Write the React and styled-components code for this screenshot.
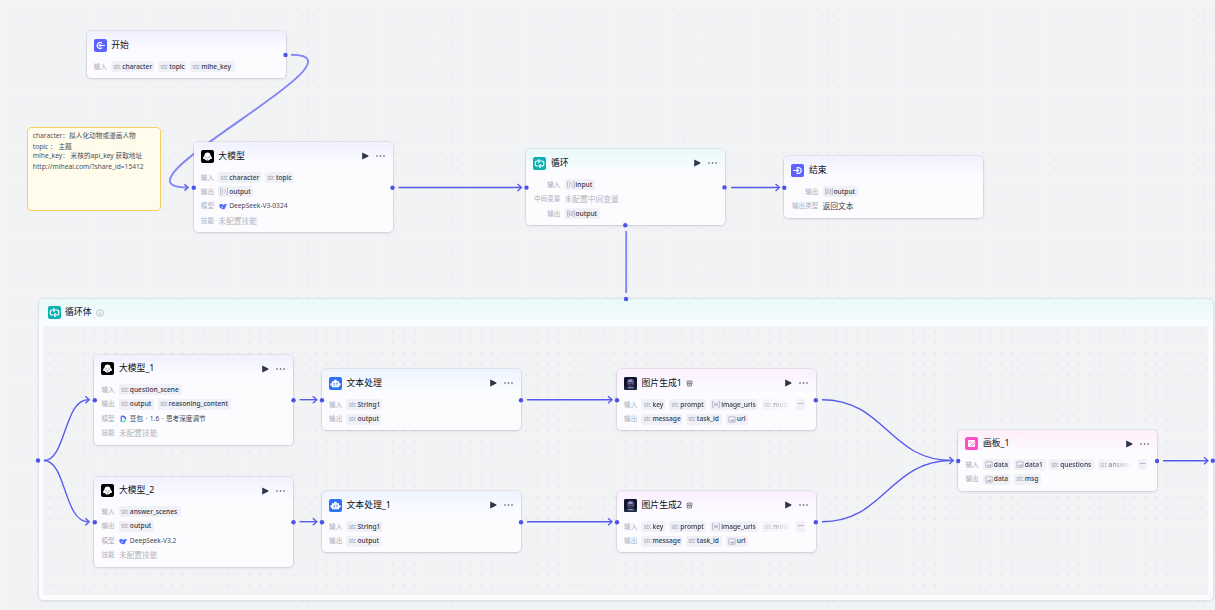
import React from 'react'
import styled, { createGlobalStyle } from 'styled-components';

const input = '输入';
const output = '输出';

const nodes = [
    {
        id: 'start', x: 86.7, y: 31.3, h: 47, title: '开始', icon: 'start', tint: '#f1f1ff', plain: true,
        rows: [{ label: input, tags: ['str:character:43.3', 'str:topic:28.3', 'str:mihe_key:45'], h: 15 }],
    },
    {
        id: 'llm', x: 193.8, y: 142.3, h: 90, title: '大模型', icon: 'llm', tint: '#f1f1ff',
        rows: [
            { label: input, tags: ['str:character:43', 'str:topic:29.3'] },
            { label: output, tags: ['obj:output:35'] },
            { label: '模型', model: 'DeepSeek-V3-0324', brand: 'deepseek' },
            { label: '技能', empty: '未配置技能', h: 16 },
        ],
    },
    {
        id: 'loop', x: 526.4, y: 149.4, h: 76, title: '循环', icon: 'loop', tint: '#e6f9f8', labelWidth: 27,
        rows: [
            { label: input, tags: ['obj:input:30.7'] },
            { label: '中间变量', empty: '未配置中间变量' },
            { label: output, tags: ['arr:output:35.3'], h: 15 },
        ],
    },
    {
        id: 'end', x: 784.4, y: 156.4, h: 62, title: '结束', icon: 'end', tint: '#f1f1ff', labelWidth: 27, plain: true,
        rows: [
            { label: output, tags: ['arr:output:35.3'] },
            { label: '输出类型', text: '返回文本', h: 15 },
        ],
    },
    {
        id: 'llm1', x: 94.4, y: 354.5, h: 90.5, title: '大模型_1', icon: 'llm', tint: '#f1f1ff',
        rows: [
            { label: input, tags: ['str:question_scene:63.3'] },
            { label: output, tags: ['str:output:35.3', 'str:reasoning_content:73.3'] },
            { label: '模型', model: '豆包 · 1.6 · 思考深度调节', brand: 'doubao', h: 15 },
            { label: '技能', empty: '未配置技能' },
        ],
    },
    {
        id: 'llm2', x: 94.4, y: 476.5, h: 90.5, title: '大模型_2', icon: 'llm', tint: '#f1f1ff',
        rows: [
            { label: input, tags: ['str:answer_scenes:62'] },
            { label: output, tags: ['str:output:35.3'] },
            { label: '模型', model: 'DeepSeek-V3.2', brand: 'deepseek', h: 15 },
            { label: '技能', empty: '未配置技能' },
        ],
    },
    {
        id: 'text', x: 322, y: 369.2, h: 60.8, title: '文本处理', icon: 'text', tint: '#edf4ff',
        rows: [
            { label: input, tags: ['str:String1:35.7'] },
            { label: output, tags: ['str:output:35'], h: 15 },
        ],
    },
    {
        id: 'text1', x: 322, y: 491.2, h: 60.8, title: '文本处理_1', icon: 'text', tint: '#edf4ff',
        rows: [
            { label: input, tags: ['str:String1:35.7'] },
            { label: output, tags: ['str:output:35'], h: 15 },
        ],
    },
    {
        id: 'image1', x: 617, y: 369.2, h: 60.8, title: '图片生成1', icon: 'image', tint: '#fbefff', plugin: true,
        rows: [
            { label: input, more: true, tags: ['str:key:24', 'str:prompt:37.3', 'sarr:image_urls:48.3', 'str:model:33'] },
            { label: output, tags: ['str:message:40.7', 'str:task_id:36.3', 'img:url:22'], h: 15 },
        ],
    },
    {
        id: 'image2', x: 617, y: 491.2, h: 60.8, title: '图片生成2', icon: 'image', tint: '#fbefff', plugin: true,
        rows: [
            { label: input, more: true, tags: ['str:key:24', 'str:prompt:37.3', 'sarr:image_urls:48.3', 'str:model:33'] },
            { label: output, tags: ['str:message:40.7', 'str:task_id:36.3', 'img:url:22'], h: 15 },
        ],
    },
    {
        id: 'board', x: 958.4, y: 429.6, h: 61, title: '画板_1', icon: 'board', tint: '#ffeef9',
        rows: [
            { label: input, more: true, tags: ['img:data:27.3', 'img:data1:31.7', 'str:questions:44.7', 'str:answers:38'] },
            { label: output, tags: ['img:data:27.3', 'str:msg:27'] },
        ],
    },
];

const ports = [
    [285.5, 55], [193.8, 187.8], [392.5, 187.8], [526.5, 187.6], [724.5, 187.4], [784.3, 187.7],
    [625.3, 225.3], [626, 299], [38, 460.5], [94.8, 400.2], [293.5, 400.2], [94.8, 522.2], [293.5, 522.2],
    [322, 400.2], [521, 400.2], [322, 522.2], [521, 522.2], [617, 400.2], [815.8, 400.2],
    [617, 522.2], [815.8, 522.2], [958.2, 461], [1157, 461], [1212.8, 460.8],
];

const edges = [
    'M398.5 187.5H521', 'M731 187.5H779',
    'M44 460.5C66 460.5 64 399.7 88 399.7', 'M44 460.5C66 460.5 64 521.7 88 521.7',
    'M299.5 399.7H316', 'M299.5 521.7H316', 'M527 399.7H611', 'M527 521.7H611',
    'M822 399.7C885 399.7 889 460.5 952 460.5', 'M822 521.7C885 521.7 889 460.5 952 460.5',
    'M1163 460.7H1207',
];

const arrows = [
    [521.5, 187.5], [779.5, 187.5], [89.3, 399.7], [89.3, 521.7], [316.8, 399.7],
    [316.8, 521.7], [612, 399.7], [612, 521.7], [953.3, 460.5], [1208, 460.7],
];

const tiles = {
    start: '#5c62ff', end: '#5c62ff', llm: '#000', loop: '#0ab3b0', text: '#2e71f4', image: '#161a33', board: '#ff4fc8',
};

function NodeIcon({ name }) {
    return (
        <Tile $color={tiles[name]} viewBox="0 0 26 26" fill="none" stroke="#fff" strokeWidth="2.4" strokeLinecap="round" strokeLinejoin="round">
            {name === 'start' && <>
                <path d="M15.5 8.2A5.800 5.800 0 1 0 15.5 17.8" />
                <path d="M12 13h9" />
                <circle cx="12" cy="13" r="2.500" fill="#fff" stroke="none" />
            </>}
            {name === 'end' && <>
                <path d="M12 7.800A5.800 5.800 0 1 1 12 18.200" />
                <path d="M5 13h9M12 10.200l3 2.800-3 2.800" />
            </>}
            {name === 'llm' && <g stroke="none">
                <path d="M13 5c4 0 6 2.600 6 5.800 0 1.300 3 2.500 3 5.200 0 2.200-2 2.400-3.500 2-1.200 2.200-3.200 3-5.500 3s-4.300-.8-5.500-3c-1.500.4-3.500.2-3.500-2 0-2.700 3-3.900 3-5.200C7 7.600 9 5 13 5z" fill="#fff" />
                <circle cx="10" cy="14" r="1" fill="#000" />
                <circle cx="16" cy="14" r="1" fill="#000" />
                <path d="M11 17.500h4l-2 1.500z" fill="#000" />
            </g>}
            {name === 'loop' && <>
                <path d="M9 18H8a3.500 3.500 0 0 1-3.500-3.500v-3A3.500 3.500 0 0 1 8 8h5" />
                <path d="M17 8h1a3.500 3.500 0 0 1 3.500 3.500v3A3.500 3.500 0 0 1 18 18h-5" />
                <path d="M11.500 5.500L14 8l-2.500 2.500M14.500 15.500L12 18l2.500 2.500" />
            </>}
            {name === 'text' && <>
                <path d="M6 8.500h4.500a2.600 2.600 0 1 1 5 0H20v4a2.400 2.400 0 1 1 0 4.500v3.500H6V17a2.400 2.400 0 1 1 0-4.500z" fill="#fff" stroke="none" />
                <path d="M11.500 12.500H9.500v2h2v2.300h-2M14 12.500h3.500M15.700 12.500v4.300" stroke="#2e71f4" strokeWidth="1" />
            </>}
            {name === 'image' && <g stroke="none">
                <path d="M0 0h26v26H0z" fill="#10152b" />
                <path d="M0 20c6-3 18-3 26 0v6H0z" fill="#202743" />
                <ellipse cx="13.500" cy="11" rx="7" ry="7.500" fill="#5d538c" />
                <ellipse cx="12.500" cy="8" rx="4.500" ry="3" fill="#9a8ec4" />
                <path d="M8 12c3-2 7-2 11 0l-2 5h-6z" fill="#27264b" />
                <path d="M10 13h3v1h-3zM15 13h2.500v1H15z" fill="#b9b6de" />
                <path d="M8 20.500h11v1.800H8z" fill="#a9afc9" />
            </g>}
            {name === 'board' && <>
                <rect x="6" y="6" width="14" height="14" rx="1.500" fill="#fff" stroke="none" />
                <path d="M8.500 11.500c1.500-2 3-2 3.500-.5" stroke="#ff4fc8" strokeWidth="1.200" />
                <path d="M12.500 17.500l.8-2.800 6.700-6.200 2 2-6.700 6.200z" fill="#fff" stroke="#ff4fc8" strokeWidth="1.200" />
            </>}
        </Tile>
    )
}

function TypeMark({ type }) {
    if (type === 'str') return <StrMark>str.</StrMark>;
    return (
        <MarkIcon viewBox="0 0 16 14" fill="none" stroke="currentColor" strokeWidth="1.300">
            {type === 'img' && <>
                <rect x="1.500" y="1.500" width="13" height="11" rx="1" />
                <path d="M3.500 10.500l3-3 2 1.500 3.500-3v4.500z" fill="currentColor" stroke="none" />
            </>}
            {type === 'obj' && <path d="M3.500 1H1v12h2.500M12.500 1H15v12h-2.500M6.500 3c-1.500 0-1 1.500-1 2.500s-.5 1.500-1 1.500c.5 0 1 .5 1 1.500s-.5 2.500 1 2.500M9.500 3c1.500 0 1 1.500 1 2.500s.5 1.500 1 1.500c-.5 0-1 .5-1 1.500s.5 2.500-1 2.500" />}
            {type === 'arr' && <path d="M3.500 1H1v12h2.500M12.500 1H15v12h-2.500M4 3.500h8v7H4zM4.500 10l2.500-3 1.500 1.500L11.500 6" />}
            {type === 'sarr' && <path d="M3.500 1H1v12h2.500M12.500 1H15v12h-2.500M6.500 5h-2v2.200h2V10h-2M8.500 3.500V10M7.500 5.500h2M11 10V5.500h1.500" />}
        </MarkIcon>
    )
}

function BrandIcon({ name }) {
    if (name === 'doubao') {
        return (
            <Brand viewBox="0 0 16 16" fill="none" strokeWidth="2.600">
                <path d="M4.500 13.500V4.500c0-1.700 1-2.400 2.500-2" stroke="#7a5cff" />
                <path d="M6.500 2.500c4.500 0 6.500 2.300 6.500 5.500" stroke="#3d5cf5" />
                <path d="M13 7.500c0 4-2.500 6-6.500 6" stroke="#42dfd0" />
            </Brand>
        )
    }
    return (
        <Brand viewBox="0 0 16 16">
            <path d="M.5 6C1.500 3.800 4 3.300 6.500 4.300c1.500.6 2.600 1.600 3.400 2.500.6-.8 0-2-.2-3.300.9.300 1.600.9 2.200 1.500C13.500 5 14.800 4.500 16 3.500c0 2.500-.9 4-2.500 4.500-.2 2.500-1 4-2.300 4.800l1.300 1.200c-2 .6-3.400.2-4.500-.2C3.500 14.500.2 10.500.5 6z" fill="#4d6bfe" />
            <path d="M4.500 8.500c2 .2 2.800 1.200 3.800 2.800-2.200.4-3.600-.5-3.800-2.800z" fill="#fff" />
        </Brand>
    )
}

function Row({ row, labelWidth }) {
    return (
        <RowContainer $height={row.h}>
            <Label $width={labelWidth}>{row.label}</Label>
            {row.tags && (
                <Tags $fade={row.more}>
                    {row.tags.map((tag) => {
                        const [type, name, width] = tag.split(':');
                        return <Tag key={tag} $width={width}><TypeMark type={type} />{name}</Tag>
                    })}
                </Tags>
            )}
            {row.more && <More>···</More>}
            {row.model && <Model><BrandIcon name={row.brand} />{row.model}</Model>}
            {row.empty && <Empty>{row.empty}</Empty>}
            {row.text && <Plain>{row.text}</Plain>}
        </RowContainer>
    )
}

function Node({ node }) {
    return (
        <NodeContainer $x={node.x} $y={node.y} $height={node.h} $tint={node.tint}>
            <NodeHeader>
                <NodeIcon name={node.icon} />
                <NodeTitle>{node.title}</NodeTitle>
                {node.plugin && (
                    <PluginIcon viewBox="0 0 14 14" fill="none" stroke="#50545e" strokeWidth="1.300">
                        <path d="M2 2h10v5H2zM3 7v5h8V7M4.500 4.500h5M5 9.500h4" />
                    </PluginIcon>
                )}
                {!node.plain && (
                    <Actions viewBox="0 0 22 8" fill="#303548">
                        <path d="M.2 1v6q0 .6.600.300L6.300 4.400q.4-.4 0-.8L.8.700Q.200.400.200 1z" />
                        <circle cx="15" cy="4" r=".75" />
                        <circle cx="18.500" cy="4" r=".75" />
                        <circle cx="22" cy="4" r=".75" />
                    </Actions>
                )}
            </NodeHeader>
            {node.rows.map((row, i) => <Row key={i} row={row} labelWidth={node.labelWidth} />)}
        </NodeContainer>
    )
}

function App() {
    return (
        <Canvas>
            <GlobalStyle />
            <LoopBody>
                <LoopHeader>
                    <NodeIcon name="loop" />
                    <NodeTitle>循环体</NodeTitle>
                    <InfoIcon viewBox="0 0 14 14" fill="none" stroke="#9b9fa8" strokeWidth="1">
                        <circle cx="7" cy="7" r="6" />
                        <path d="M6 6h1.300v4M5.500 10h3.500M6.400 3.800h1.200" />
                    </InfoIcon>
                </LoopHeader>
                <LoopArea />
            </LoopBody>
            <Lines viewBox="0 0 1215 610" fill="none">
                <g stroke="#8286f2" strokeWidth="1.900">
                    <path d="M291 54.700C378 54.700 100 187.500 187 187.500" />
                    <path d="M626.200 231V293" />
                </g>
                <path d="M184.500 184.300l3.500 3.200-3.500 3.200" stroke="#6a6ff0" strokeWidth="1.700" />
                <g stroke="#555aeb" strokeWidth="1.350">
                    {edges.map((d) => <path key={d} d={d} />)}
                    {arrows.map(([x, y]) => <path key={`${x}-${y}`} d={`M${x - 4} ${y - 3.5}l4 3.5-4 3.5`} />)}
                </g>
            </Lines>
            <Note>
                <NoteLine>character：拟人化动物或漫画人物</NoteLine>
                <NoteLine $height={11}>topic ： 主题</NoteLine>
                <NoteLine $height={8}>mihe_key： 米核的api_key 获取地址</NoteLine>
                <NoteLine $height={13}>http://miheai.com/?share_id=15412</NoteLine>
            </Note>
            {nodes.map((node) => <Node key={node.id} node={node} />)}
            <Lines viewBox="0 0 1215 610" fill="#4d53e8">
                {ports.map(([x, y]) => <circle key={`${x}-${y}`} cx={x} cy={y} r="2.200" />)}
            </Lines>
        </Canvas>
    )
}

export default App

const GlobalStyle = createGlobalStyle`
body{
margin:0;
font-family:"Noto Sans", "Noto Sans CJK SC", sans-serif;
}
*{
box-sizing:border-box;
}
`;

const Canvas = styled.div`
position:relative;
width:1215px;
height:610px;
overflow:hidden;
background-color:#f2f3f5;
background-image:radial-gradient(circle, #e8eaed 0.7px, transparent 1.2px);
background-size:11.07px 11.07px;
background-position:3.8px 3.7px;
`;

const Lines = styled.svg`
position:absolute;
left:0;
top:0;
width:1215px;
height:610px;
`;

const LoopBody = styled.div`
position:absolute;
left:38px;
top:298px;
width:1176px;
height:303px;
padding:0 5px 5px 4px;
display:flex;
flex-direction:column;
border:1px solid #dfe2ea;
border-radius:5px;
background:linear-gradient(#e8f9f8, #fcfcff 28px);
box-shadow:0 1px 3px rgba(0,0,0,0.06);
`;

const LoopHeader = styled.div`
height:27px;
flex-shrink:0;
padding-left:4.5px;
display:flex;
align-items:center;
`;

const LoopArea = styled.div`
flex:1;
background-color:#f2f3f5;
background-image:radial-gradient(circle, #e5e7eb 0.7px, transparent 1.2px);
background-size:11.07px 11.07px;
background-position:1.5px -0.5px;
`;

const NodeContainer = styled.div`
position:absolute;
left:${(p) => p.$x}px;
top:${(p) => p.$y}px;
width:199px;
height:${(p) => p.$height}px;
padding:0 7px;
border-radius:4.5px;
background:linear-gradient(${(p) => p.$tint}, #fcfcff 24px);
box-shadow:0 0 0 0.6px rgba(50,60,110,0.14), 0 1px 3px rgba(30,35,60,0.12);
`;

const NodeHeader = styled.div`
height:28.2px;
display:flex;
align-items:center;
`;

const Tile = styled.svg`
width:13px;
height:13px;
flex-shrink:0;
border-radius:2px;
background:${(p) => p.$color};
`;

const NodeTitle = styled.div`
margin-left:4.5px;
padding-top:0.6px;
font-size:8.85px;
line-height:13px;
font-weight:400;
color:#0c1018;
white-space:nowrap;
`;

const PluginIcon = styled.svg`
width:7px;
height:7px;
margin-left:4px;
`;

const InfoIcon = styled.svg`
width:8px;
height:8px;
margin-left:4px;
`;

const Actions = styled.svg`
width:22px;
height:8px;
margin-left:auto;
margin-right:2px;
overflow:visible;
`;

const RowContainer = styled.div`
height:${(p) => p.$height || 14.3}px;
display:flex;
align-items:center;
`;

const Label = styled.div`
width:${(p) => p.$width || 13.3}px;
margin-right:4.2px;
flex-shrink:0;
font-size:6.64px;
line-height:10px;
text-align:right;
white-space:nowrap;
color:#a9aec2;
`;

const Tags = styled.div`
display:flex;
gap:3.7px;
${(p) => p.$fade && `
width:153.5px;
flex-shrink:0;
overflow:hidden;
mask-image:linear-gradient(90deg, #000 114px, transparent 149px);
`}
`;

const Tag = styled.div`
width:${(p) => p.$width}px;
height:11px;
padding-left:2.2px;
flex-shrink:0;
display:flex;
align-items:center;
border-radius:2px;
background:#f0f0f7;
font-size:6.64px;
line-height:10px;
font-weight:500;
color:#343848;
white-space:nowrap;
`;

const StrMark = styled.span`
width:8.8px;
flex-shrink:0;
font-size:6.3px;
letter-spacing:-0.35px;
font-weight:400;
color:#a4a8bb;
`;

const MarkIcon = styled.svg`
width:8px;
height:7px;
margin-right:0.8px;
flex-shrink:0;
color:#a0a4b8;
`;

const More = styled.div`
width:9px;
height:11px;
margin-left:1.5px;
flex-shrink:0;
border-radius:2px;
background:#f0f0f7;
font-size:6.64px;
line-height:10px;
text-align:center;
color:#555a70;
`;

const Model = styled.div`
display:flex;
align-items:center;
font-size:6.64px;
line-height:10px;
word-spacing:0.75px;
color:#41465a;
white-space:nowrap;
`;

const Brand = styled.svg`
width:8px;
height:8px;
margin-left:0.6px;
margin-right:2.4px;
`;

const Empty = styled.div`
font-size:7.74px;
line-height:10px;
color:#b3b5be;
white-space:nowrap;
`;

const Plain = styled.div`
font-size:7.74px;
line-height:10px;
color:#3c4150;
`;

const Note = styled.div`
position:absolute;
left:26.5px;
top:127px;
width:134.5px;
height:84px;
padding:2.5px 5.3px;
display:flex;
flex-direction:column;
border:1px solid #f3cf63;
border-radius:4px;
background:#fffceb;
`;

const NoteLine = styled.div`
height:${(p) => p.$height || 10.5}px;
font-size:6.68px;
line-height:${(p) => p.$height || 10.5}px;
color:#4b5060;
white-space:nowrap;
`;
